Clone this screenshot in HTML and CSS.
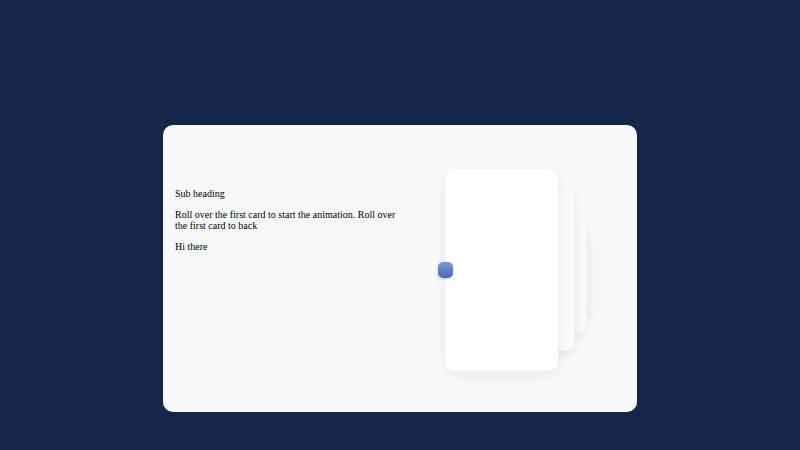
FILE: index.html
```html
<!DOCTYPE html>
<html>
<head>
<meta charset="utf-8">
<link rel="stylesheet" href="styles.css">
</head>
<body>
<div class="panel">
  <div class="copy">
    <p>Sub heading</p>
    <p>Roll over the first card to start the animation. Roll over the first card to back</p>
    <p>Hi there</p>
  </div>
  <div class="stack">
    <div class="card card4"></div>
    <div class="card card3"></div>
    <div class="card card2"></div>
    <div class="card card1"></div>
    <div class="dot"></div>
  </div>
</div>
</body>
</html>
```
FILE: styles.css
```css
html, body {
  margin: 0;
  padding: 0;
}
body {
  background: #16264a;
  width: 800px;
  height: 450px;
  overflow: hidden;
  font-family: "Liberation Serif", "Times New Roman", serif;
  font-size: 10px;
  color: #000;
}
.panel {
  box-sizing: border-box;
  width: 474px;
  height: 287px;
  margin: 125px auto 0;
  background: #f8f9fc;
  border-radius: 10px;
  display: flex;
  padding-left: 12px;
}
.copy {
  width: 228px;
  padding-top: 53px;
}
.copy p {
  margin: 10px 0;
}
.stack {
  position: relative;
  width: 160px;
  height: 202px;
  margin-top: 44px;
  margin-left: 35px;
}
.card {
  position: absolute;
  width: 113px;
  border-radius: 10px;
  background: #ffffff;
}
.card1 {
  left: 7px;
  top: 0;
  height: 202px;
  box-shadow: 0 4px 14px rgba(30, 40, 80, 0.08);
}
.card2 {
  left: 24px;
  top: 19px;
  height: 163px;
  background: #fbfbfd;
  box-shadow: 0 3px 10px rgba(30, 40, 80, 0.09);
}
.card3 {
  left: 36px;
  top: 46px;
  height: 118px;
  background: #f9f9fb;
  box-shadow: 0 3px 8px rgba(30, 40, 80, 0.08);
}
.card4 {
  left: 46px;
  top: 71px;
  height: 72px;
  border-radius: 8px;
  background: #f7f7fa;
  box-shadow: 0 2px 6px rgba(30, 40, 80, 0.07);
}
.dot {
  position: absolute;
  left: 0;
  top: 93px;
  width: 15px;
  height: 16px;
  border-radius: 5px;
  background: linear-gradient(180deg, #7c97de 0%, #4d66b3 100%);
  box-shadow: 0 1px 3px rgba(40, 60, 130, 0.25);
}
```
